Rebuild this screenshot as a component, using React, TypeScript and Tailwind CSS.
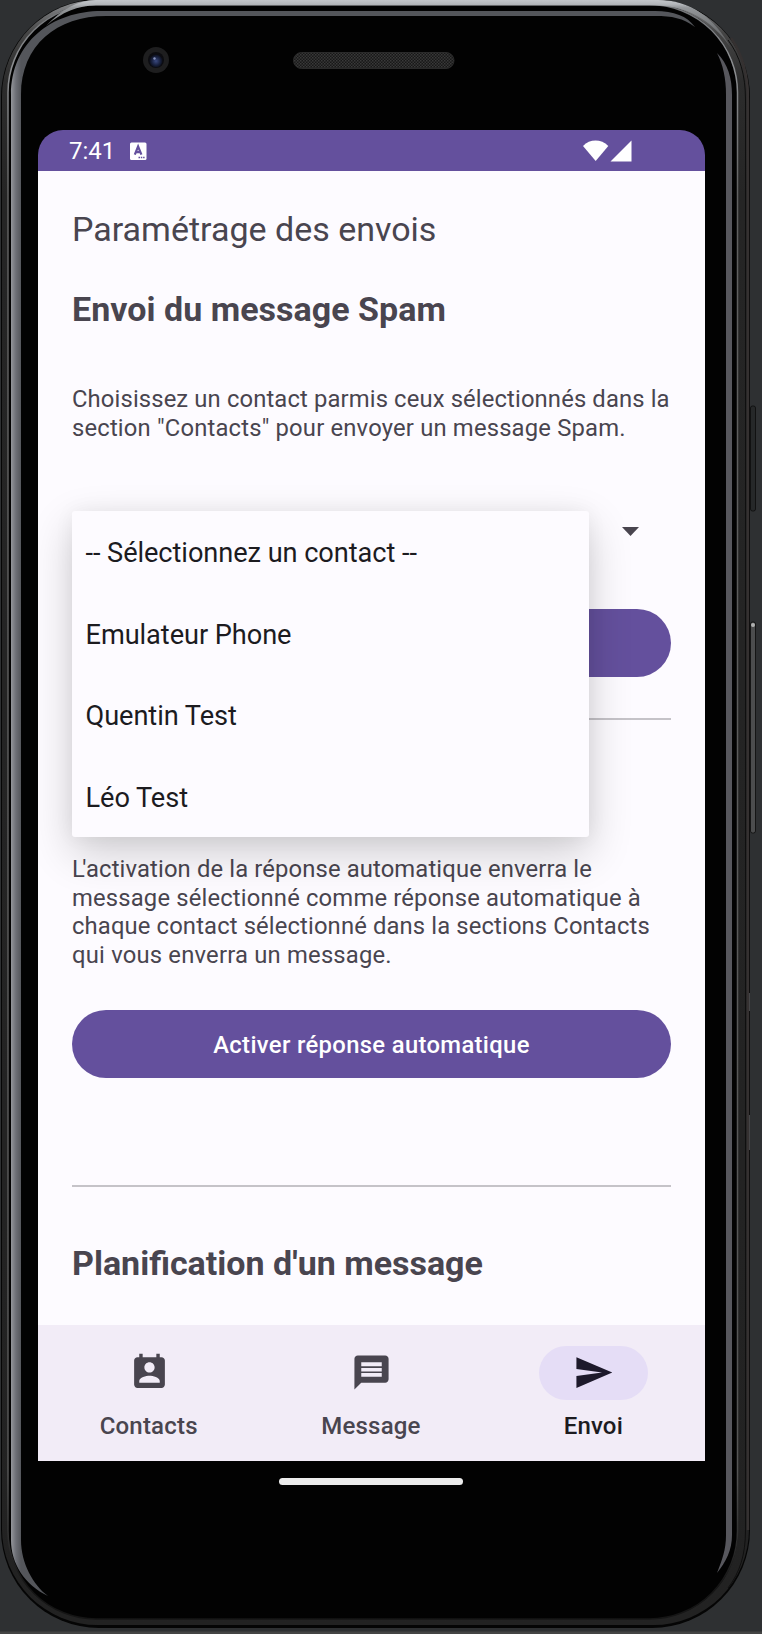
import React from "react";

function PhoneFrame() {
  return (
    <svg className="absolute inset-0" width="762" height="1634" viewBox="0 0 762 1634" fill="none" aria-hidden="true">
      <defs>
        <linearGradient id="metal" x1="0" y1="0" x2="0" y2="1634" gradientUnits="userSpaceOnUse">
          <stop offset="0" stopColor="#8d8f92" />
          <stop offset="0.02" stopColor="#454545" />
          <stop offset="0.05" stopColor="#2c2c2c" />
          <stop offset="0.12" stopColor="#252525" />
          <stop offset="1" stopColor="#222222" />
        </linearGradient>
        <linearGradient id="rim" x1="0" y1="0" x2="0" y2="1634" gradientUnits="userSpaceOnUse">
          <stop offset="0" stopColor="#6e7073" />
          <stop offset="0.04" stopColor="#8d8f92" />
          <stop offset="0.12" stopColor="#606060" />
          <stop offset="0.9" stopColor="#555555" />
          <stop offset="0.97" stopColor="#151515" />
        </linearGradient>
        <linearGradient id="glassL" x1="11" y1="0" x2="21" y2="0" gradientUnits="userSpaceOnUse">
          <stop offset="0" stopColor="#94969b" />
          <stop offset="0.5" stopColor="#6c6e75" />
          <stop offset="1" stopColor="#54565b" />
        </linearGradient>
        <radialGradient id="lens">
          <stop offset="0" stopColor="#3b4a80" />
          <stop offset="0.6" stopColor="#1b2444" />
          <stop offset="1" stopColor="#0b0e1a" />
        </radialGradient>
        <linearGradient id="topBar" x1="0" y1="0" x2="0" y2="60" gradientUnits="userSpaceOnUse">
          <stop offset="0" stopColor="#c3c6ca" />
          <stop offset="0.07" stopColor="#b4b7bb" />
          <stop offset="0.13" stopColor="#94979a" />
          <stop offset="0.6" stopColor="#66686a" />
          <stop offset="1" stopColor="#333333" />
        </linearGradient>
        <pattern id="mesh" width="3" height="3" patternUnits="userSpaceOnUse">
          <rect width="3" height="3" fill="#181818" />
          <rect width="1.5" height="1.5" fill="#3a3a3a" />
          <rect x="1.5" y="1.5" width="1.5" height="1.5" fill="#353535" />
        </pattern>
      </defs>
      <rect y="1631.5" width="762" height="2.5" fill="#444444" />
      <rect x="1" y="-1" width="749" height="1629" rx="98" fill="#050505" />
      <rect x="2" y="0" width="747" height="1625" rx="96" fill="url(#metal)" />
      <rect x="8" y="4" width="730" height="1615" rx="88" fill="#020202" />
      <rect x="8" y="4.5" width="729.5" height="1614.5" rx="88" stroke="url(#rim)" strokeWidth="1.5" />
      <path d="M46 26C62 9 78 0 96 0H658C690 0 714 17 731 48C711 19 686 5.5 655 5.5H96C78 5.5 62 12 46 26Z" fill="url(#topBar)" />
      <path d="M11 95C11 42 52 11 102 11H655C674 11 687 16 695 27C683 18 672 16 655 16H106C57 16 21 45 21 95V1540C21 1563 33 1585 48 1596C25 1585 11 1564 11 1540Z" fill="url(#glassL)" />
      <path d="M717 53C728 64 732 78 732 95V1535C732 1550 726 1562 717 1573C722 1560 726 1550 726 1535V95C726 78 723 65 717 53Z" fill="#57575d" />
      <path d="M728 40C740 56 745.5 75 745.5 100V1530C745.5 1555 740 1572 728 1588" stroke="#0f0f0f" />
      <path d="M731 38C743 55 748 75 748 100V1530" stroke="#353131" strokeWidth="2.5" />
      <path d="M749.5 993V1011M749.5 1115V1150" stroke="#454547" />
      <circle cx="156" cy="60" r="13" fill="#1e1e1f" />
      <circle cx="156" cy="60" r="8" fill="#0c0c10" />
      <circle cx="156" cy="61" r="6.5" fill="url(#lens)" />
      <circle cx="154.5" cy="58.5" r="1.2" fill="#8793bd" />
      <rect x="293.5" y="52.5" width="160.5" height="16" rx="8" fill="url(#mesh)" stroke="#2a2a2a" />
      <rect x="750.5" y="406" width="5" height="105" rx="2" fill="#262829" stroke="#111" />
      <rect x="750.5" y="622" width="5" height="211" rx="2" fill="#4c4d4e" stroke="#151515" />
      <circle cx="753" cy="625" r="2" fill="#b0b0b0" />
    </svg>
  );
}

function StatusBar() {
  return (
    <div className="flex h-[41px] shrink-0 items-center bg-[#64509d] pl-[31px] pr-[73px] text-white">
      <span className="w-[60.5px] pt-px text-[24px] leading-[41px]">7:41</span>
      <svg width="17" height="18" viewBox="0 0 17 18" aria-hidden="true">
        <rect width="16.5" height="17.5" rx="1.5" y="0.5" fill="#fff" />
        <path d="M4.8 12.7L8.1 4.5L11.4 12.7M6.2 10.2H10" stroke="#64509d" strokeWidth="2.2" fill="none" />
        <path d="M8.5 15.5H15" stroke="#64509d" strokeWidth="1.4" strokeDasharray="1.5 0.8" />
      </svg>
      <svg className="ml-auto" width="49" height="22" viewBox="0 0 49 22" aria-hidden="true">
        <path d="M0 6C7-1.3 18-1.3 25.3 6L12.7 21Z" fill="#fff" />
        <path d="M27.5 21.5H48.5V0.5Z" fill="#fff" />
      </svg>
    </div>
  );
}

const contacts = ["-- Sélectionnez un contact --", "Emulateur Phone", "Quentin Test", "Léo Test"];

function ContactMenu() {
  return (
    <ul className="absolute left-0 top-0 h-[326px] w-[517px] rounded-[3px] bg-[#fdfbff] shadow-[0_16px_44px_rgba(0,0,0,0.19),0_0_20px_rgba(0,0,0,0.05)]">
      {contacts.map((c) => (
        <li key={c} className="flex h-[81.5px] items-center whitespace-nowrap pl-[13.5px] pt-[4px] text-[27.2px] tracking-[-0.07px] text-[#1c1b1f]">
          {c}
        </li>
      ))}
    </ul>
  );
}

function NavItem({ label, d, active = false }: { label: string; d: string; active?: boolean }) {
  return (
    <div className="flex flex-1 flex-col items-center pt-[21px]">
      <span className={active ? "flex h-[54px] w-[109px] items-center justify-center rounded-full bg-[#e5ddf6]" : "flex h-[54px] w-[109px] items-center justify-center"}>
        <svg className="-mt-px" width="41" height="41" viewBox="0 0 24 24" fill={active ? "#1d192b" : "#49454f"} aria-hidden="true">
          <path d={d} />
        </svg>
      </span>
      <span className={active ? "mt-[10px] pr-px text-[24px] leading-8 font-medium tracking-[0.2px] text-[#1c1b1f]" : "mt-[10px] pr-px text-[24px] leading-8 font-medium tracking-[0.2px] text-[#49454f]"}>{label}</span>
    </div>
  );
}

export default function App() {
  return (
    <div className="relative h-[1634px] w-[762px] overflow-hidden bg-[#2e3032] pl-[38px] pt-[130px] font-['Roboto',sans-serif]">
      <PhoneFrame />
      <div className="relative flex h-[1331px] w-[667px] flex-col overflow-hidden rounded-t-[25px]">
        <StatusBar />
        <main className="flex min-h-0 flex-1 flex-col bg-[#fdfbff] px-[34px] text-[#49454f]">
          <h1 className="mt-[38px] h-[40px] whitespace-nowrap text-[34px] leading-[40px]">Paramétrage des envois</h1>
          <h2 className="mt-[40px] h-[40px] whitespace-nowrap text-[34px] leading-[40px] font-bold tracking-[0.03px]">Envoi du message Spam</h2>
          <p className="mt-[56px] h-[57px] whitespace-nowrap text-[23.8px] leading-[28.5px] tracking-[0.13px]">
            Choisissez un contact parmis ceux sélectionnés dans la
            <br />
            <span className="tracking-[0.18px]">section "Contacts" pour envoyer un message Spam.</span>
          </p>
          <div className="relative z-10 mt-[69px] flex h-[41px] items-center justify-end pr-[32px]">
            <svg width="17" height="9" viewBox="0 0 17 9" aria-hidden="true">
              <path d="M0 0H17L8.5 9Z" fill="#49454f" />
            </svg>
            <ContactMenu />
          </div>
          <div className="mt-[57px] h-[68px] shrink-0 rounded-full bg-[#64509d]" />
          <div className="mt-[41px] h-[2px] shrink-0 bg-[#c5c3c8]" />
          <p className="mt-[135px] h-[114px] shrink-0 whitespace-nowrap text-[23.8px] leading-[28.5px] tracking-[0.13px]">
            <span className="tracking-[-2.5px]">L</span>'activation de la réponse automatique enverra le
            <br />
            <span className="tracking-[0.17px]">message sélectionné comme réponse automatique à</span>
            <br />
            chaque contact sélectionné dans la sections Contacts
            <br />
            <span className="tracking-[0.2px]">qui vous enverra un message.</span>
          </p>
          <button className="mt-[41px] h-[68px] shrink-0 rounded-full bg-[#64509d] pt-[3px] text-[23.8px] font-medium tracking-[0.35px] text-white">Activer réponse automatique</button>
          <div className="mt-[107px] h-[2px] shrink-0 bg-[#c5c3c8]" />
          <h2 className="mt-[56px] h-[40px] whitespace-nowrap text-[34px] leading-[40px] font-bold">
            Planification d'un message
          </h2>
        </main>
        <nav className="flex h-[136px] shrink-0 bg-[#f2ecf7]">
          <NavItem label="Contacts" d="M19 3h-1V1h-2v2H8V1H6v2H5c-1.11 0-2 .9-2 2v14c0 1.1.89 2 2 2h14c1.1 0 2-.9 2-2V5c0-1.1-.9-2-2-2zm-7 3c1.66 0 3 1.34 3 3s-1.34 3-3 3-3-1.34-3-3 1.34-3 3-3zm6 12H6v-1c0-2 4-3.1 6-3.1s6 1.1 6 3.1v1z" />
          <NavItem label="Message" d="M20 2H4c-1.1 0-1.99.9-1.99 2L2 22l4-4h14c1.1 0 2-.9 2-2V4c0-1.1-.9-2-2-2zM6 6h12v2.3H6zm0 3.3h12v2.1H6zm0 3h12v2.2H6z" />
          <NavItem active label="Envoi" d="M2.01 21L23 12 2.01 3 2 10l15 2-15 2z" />
        </nav>
      </div>
      <div className="relative ml-[241px] mt-[17px] h-[7px] w-[184px] rounded-full bg-[#ececec]" />
    </div>
  );
}
